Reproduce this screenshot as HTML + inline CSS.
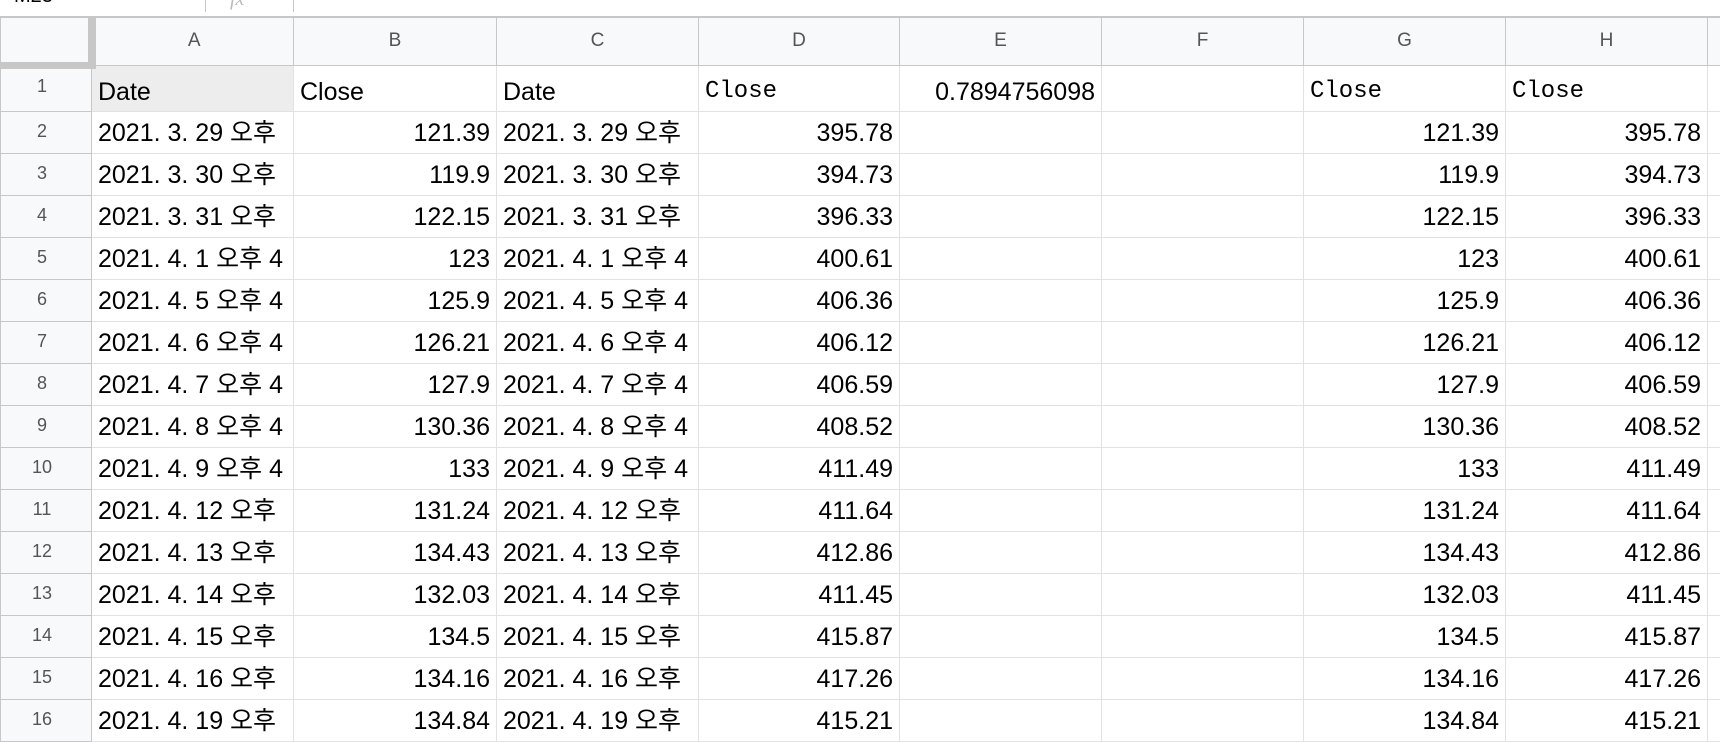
<!DOCTYPE html>
<html><head><meta charset="utf-8">
<style>
html,body{margin:0;padding:0;background:#fff;overflow:hidden;width:1720px;height:712px}
.top{position:absolute;left:0;top:0;width:1720px;height:16px;border-bottom:1px solid #c7c7c7;background:#fff;overflow:hidden}
.top .nm{position:absolute;left:14px;top:-15px;font:20px "Liberation Sans",sans-serif;color:#000}
.top .s1{position:absolute;left:205px;top:0;width:1px;height:12px;background:#c7c7c7}
.top .fx{position:absolute;left:230px;top:-12px;font:italic 20px "Liberation Serif",serif;color:#bbb}
.top .s2{position:absolute;left:293px;top:0;width:1px;height:12px;background:#c7c7c7}
table{position:absolute;left:0;top:17px;width:1767px;border-collapse:collapse;table-layout:fixed;font-family:"Liberation Sans","Noto Sans CJK KR",sans-serif;font-size:25px;color:#000}
td{border:1px solid #e2e2e2;padding:6px 6px 0 6px;white-space:nowrap;overflow:hidden;height:37px;box-sizing:border-box;vertical-align:top;line-height:30px}
td span{font-size:25px}
tr.h td{background:#f8f9fa;border-color:#c7c7c7;color:#555;font-size:19px;text-align:center;height:48px;padding:12px 0 0;line-height:22px}
tr.r1 td{height:46px;padding-top:11px}
td.rh{background:#f8f9fa;border-color:#c7c7c7;color:#555;font-size:18px;text-align:center;padding:8px 8px 0 0;line-height:22px}
tr.r1 td.rh{padding-top:6px}
td.corner{background:#f8f9fa;border-right:8px solid #c7c7c7;border-bottom:7px solid #c7c7c7}
tr.d td{height:42px}
.n{text-align:right}
.m{font-family:"Liberation Mono",monospace;font-size:24px}
.sel{background:#ededed}
</style></head><body>
<div class="top"><span class="nm">M23</span><span class="s1"></span><span class="fx">fx</span><span class="s2"></span></div>
<table>
<colgroup><col style="width:91px"><col style="width:202px"><col style="width:203px"><col style="width:202px"><col style="width:201px"><col style="width:202px"><col style="width:202px"><col style="width:202px"><col style="width:202px"><col style="width:60px"></colgroup>
<tr class="h"><td class="corner"></td><td>A</td><td>B</td><td>C</td><td>D</td><td>E</td><td>F</td><td>G</td><td>H</td><td></td></tr>
<tr class="r1"><td class="rh">1</td><td class="sel">Date</td><td>Close</td><td>Date</td><td class="m">Close</td><td class="n">0.7894756098</td><td></td><td class="m">Close</td><td class="m">Close</td><td></td></tr>
<tr class="d"><td class="rh">2</td><td>2021. 3. 29 오후</td><td class="n">121.39</td><td>2021. 3. 29 오후</td><td class="n">395.78</td><td></td><td></td><td class="n">121.39</td><td class="n">395.78</td><td></td></tr>
<tr class="d"><td class="rh">3</td><td>2021. 3. 30 오후</td><td class="n">119.9</td><td>2021. 3. 30 오후</td><td class="n">394.73</td><td></td><td></td><td class="n">119.9</td><td class="n">394.73</td><td></td></tr>
<tr class="d"><td class="rh">4</td><td>2021. 3. 31 오후</td><td class="n">122.15</td><td>2021. 3. 31 오후</td><td class="n">396.33</td><td></td><td></td><td class="n">122.15</td><td class="n">396.33</td><td></td></tr>
<tr class="d"><td class="rh">5</td><td>2021. 4. 1 오후 4</td><td class="n">123</td><td>2021. 4. 1 오후 4</td><td class="n">400.61</td><td></td><td></td><td class="n">123</td><td class="n">400.61</td><td></td></tr>
<tr class="d"><td class="rh">6</td><td>2021. 4. 5 오후 4</td><td class="n">125.9</td><td>2021. 4. 5 오후 4</td><td class="n">406.36</td><td></td><td></td><td class="n">125.9</td><td class="n">406.36</td><td></td></tr>
<tr class="d"><td class="rh">7</td><td>2021. 4. 6 오후 4</td><td class="n">126.21</td><td>2021. 4. 6 오후 4</td><td class="n">406.12</td><td></td><td></td><td class="n">126.21</td><td class="n">406.12</td><td></td></tr>
<tr class="d"><td class="rh">8</td><td>2021. 4. 7 오후 4</td><td class="n">127.9</td><td>2021. 4. 7 오후 4</td><td class="n">406.59</td><td></td><td></td><td class="n">127.9</td><td class="n">406.59</td><td></td></tr>
<tr class="d"><td class="rh">9</td><td>2021. 4. 8 오후 4</td><td class="n">130.36</td><td>2021. 4. 8 오후 4</td><td class="n">408.52</td><td></td><td></td><td class="n">130.36</td><td class="n">408.52</td><td></td></tr>
<tr class="d"><td class="rh">10</td><td>2021. 4. 9 오후 4</td><td class="n">133</td><td>2021. 4. 9 오후 4</td><td class="n">411.49</td><td></td><td></td><td class="n">133</td><td class="n">411.49</td><td></td></tr>
<tr class="d"><td class="rh">11</td><td>2021. 4. 12 오후</td><td class="n">131.24</td><td>2021. 4. 12 오후</td><td class="n">411.64</td><td></td><td></td><td class="n">131.24</td><td class="n">411.64</td><td></td></tr>
<tr class="d"><td class="rh">12</td><td>2021. 4. 13 오후</td><td class="n">134.43</td><td>2021. 4. 13 오후</td><td class="n">412.86</td><td></td><td></td><td class="n">134.43</td><td class="n">412.86</td><td></td></tr>
<tr class="d"><td class="rh">13</td><td>2021. 4. 14 오후</td><td class="n">132.03</td><td>2021. 4. 14 오후</td><td class="n">411.45</td><td></td><td></td><td class="n">132.03</td><td class="n">411.45</td><td></td></tr>
<tr class="d"><td class="rh">14</td><td>2021. 4. 15 오후</td><td class="n">134.5</td><td>2021. 4. 15 오후</td><td class="n">415.87</td><td></td><td></td><td class="n">134.5</td><td class="n">415.87</td><td></td></tr>
<tr class="d"><td class="rh">15</td><td>2021. 4. 16 오후</td><td class="n">134.16</td><td>2021. 4. 16 오후</td><td class="n">417.26</td><td></td><td></td><td class="n">134.16</td><td class="n">417.26</td><td></td></tr>
<tr class="d"><td class="rh">16</td><td>2021. 4. 19 오후</td><td class="n">134.84</td><td>2021. 4. 19 오후</td><td class="n">415.21</td><td></td><td></td><td class="n">134.84</td><td class="n">415.21</td><td></td></tr>
</table>
</body></html>
